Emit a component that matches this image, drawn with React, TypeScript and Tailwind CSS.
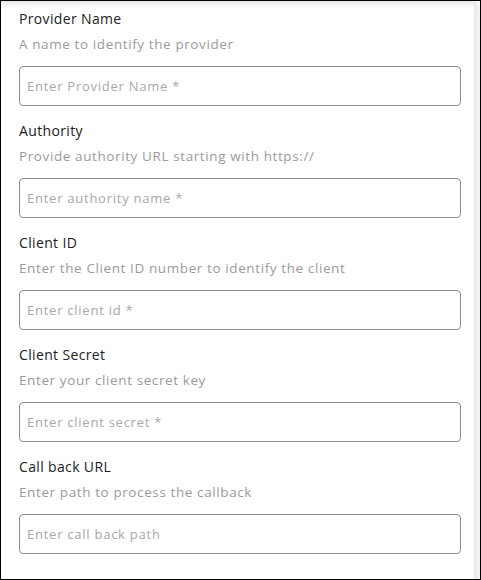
import React from 'react';

interface Field {
  label: string;
  hint: string;
  placeholder: string;
}

const fields: Field[] = [
  { label: 'Provider Name', hint: 'A name to identify the provider', placeholder: 'Enter Provider Name *' },
  { label: 'Authority', hint: 'Provide authority URL starting with https://', placeholder: 'Enter authority name *' },
  { label: 'Client ID', hint: 'Enter the Client ID number to identify the client', placeholder: 'Enter client id *' },
  { label: 'Client Secret', hint: 'Enter your client secret key', placeholder: 'Enter client secret *' },
  { label: 'Call back URL', hint: 'Enter path to process the callback', placeholder: 'Enter call back path' },
];

export default function App() {
  return (
    <div
      className="w-[481px] h-[580px] border border-black bg-[#f4f4f4] overflow-hidden flex"
      style={{ fontFamily: '"Open Sans", "Liberation Sans", sans-serif' }}
    >
      <div className="w-[473px] h-full bg-white shadow-[inset_0_7px_6px_-5px_rgba(0,0,0,0.14),2px_0_4px_rgba(0,0,0,0.06)] pl-[18px] pr-[12px] pt-[8px]">
        {fields.map((f) => (
          <div key={f.label} className="h-[112px]">
            <div className="text-[14px] leading-[20px] tracking-[0.35px] text-[#222]">{f.label}</div>
            <div className="mt-[5px] text-[13.5px] leading-[20px] tracking-[0.6px] text-[#9b9b9b]">{f.hint}</div>
            <input
              type="text"
              placeholder={f.placeholder}
              className="mt-[12px] w-[442px] h-[40px] border border-[#8c8c8c] rounded-[4px] px-[7px] text-[13px] tracking-[0.75px] outline-none placeholder:text-[#a8a8a8]"
            />
          </div>
        ))}
      </div>
    </div>
  );
}
